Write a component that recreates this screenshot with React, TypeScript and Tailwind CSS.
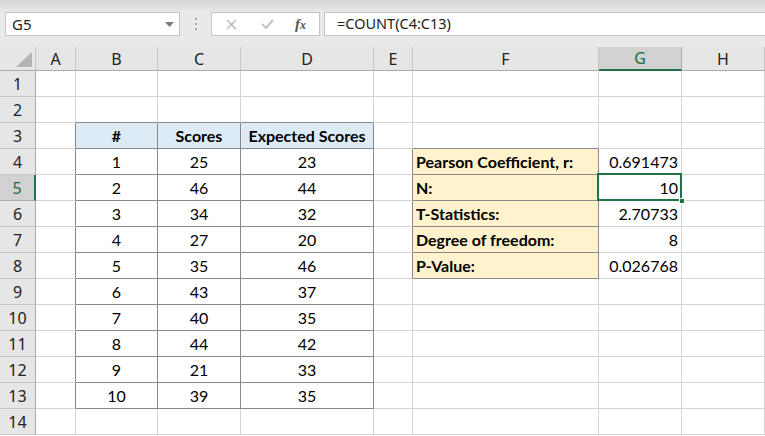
import React from 'react';

const cellFont = { fontFamily: 'Lato, "Open Sans", sans-serif' };
const uiFont = { fontFamily: '"Noto Sans", "Open Sans", sans-serif' };

const colLetters = ['A', 'B', 'C', 'D', 'E', 'F', 'G', 'H'];

const scores: [number, number, number][] = [
    [1, 25, 23],
    [2, 46, 44],
    [3, 34, 32],
    [4, 27, 20],
    [5, 35, 46],
    [6, 43, 37],
    [7, 40, 35],
    [8, 44, 42],
    [9, 21, 33],
    [10, 39, 35],
];

const stats: [string, string][] = [
    ['Pearson Coefficient, r:', '0.691473'],
    ['N:', '10'],
    ['T-Statistics:', '2.70733'],
    ['Degree of freedom:', '8'],
    ['P-Value:', '0.026768'],
];

const inRange = (v: number, a: number, b: number) => v >= a && v <= b;

const Cell: React.FC<{ row: number; col: number }> = ({ row, col }) => {
    // table 1: B3:D13, table 2: F4:F8 (+ values in G)
    const t1 = inRange(col, 1, 3) && inRange(row, 3, 13);
    const darkRight = (inRange(col, 0, 3) && inRange(row, 3, 13)) || (inRange(col, 4, 5) && inRange(row, 4, 8));
    const darkBottom = (inRange(col, 1, 3) && inRange(row, 2, 13)) || (col === 5 && inRange(row, 3, 8));

    let bg = 'bg-white';
    let content: React.ReactNode = null;
    let align = 'justify-center';
    let weight = 'font-normal';

    if (t1 && row === 3) {
        bg = 'bg-[#ddebf7]';
        weight = 'font-bold';
        content = ['#', 'Scores', 'Expected Scores'][col - 1];
    } else if (t1) {
        content = scores[row - 4][col - 1];
    }
    if (col === 5 && inRange(row, 4, 8)) {
        bg = 'bg-[#fff2cc]';
        weight = 'font-bold';
        align = 'justify-start pl-[3px]';
        content = stats[row - 4][0];
    }
    if (col === 6 && inRange(row, 4, 8)) {
        align = 'justify-end pr-[3px]';
        content = stats[row - 4][1];
    }

    const selected = row === 5 && col === 6;

    return (
        <div
            className={`relative h-[26px] flex items-center whitespace-nowrap text-[16px] text-black border-r border-b ${bg} ${align} ${weight} ${
                darkRight ? 'border-r-[#8a8a8a]' : 'border-r-[#d4d4d4]'
            } ${darkBottom ? 'border-b-[#8a8a8a]' : 'border-b-[#d4d4d4]'}`}
            style={cellFont}
        >
            {content}
            {selected && (
                <>
                    <div className="absolute -left-[2px] -top-[2px] -right-[1px] -bottom-[1px] border-2 border-[#217346]" />
                    <div className="absolute -right-[4px] -bottom-[4px] w-[6px] h-[6px] bg-[#217346] border border-white z-10" />
                </>
            )}
        </div>
    );
};

const App: React.FC = () => {
    const rows = Array.from({ length: 14 }, (_, i) => i + 1);

    return (
        <div className="w-[765px] h-[436px] overflow-hidden bg-white">
            {/* Formula bar */}
            <div className="h-[47px] bg-gradient-to-b from-[#d6d6d6] via-[#e9e9e9] via-[25%] to-[#e9e9e9] pt-[12px] flex items-start">
                <div className="ml-[5px] w-[175px] h-[24px] bg-white border border-[#c6c6c6] flex items-center justify-between pl-[6px] pr-[5px]" style={uiFont}>
                    <span className="text-[15px] text-[#222]">G5</span>
                    <svg width="9" height="5" viewBox="0 0 9 5"><path d="M0 0h9L4.5 5z" fill="#7a7a7a" /></svg>
                </div>
                <div className="w-[31px] h-[24px] flex flex-col items-center justify-center gap-[3px]">
                    <span className="w-[2px] h-[2px] bg-[#a6a6a6]" />
                    <span className="w-[2px] h-[2px] bg-[#a6a6a6]" />
                    <span className="w-[2px] h-[2px] bg-[#a6a6a6]" />
                </div>
                <div className="w-[109px] h-[24px] bg-white border border-[#c6c6c6] flex items-center">
                    <svg className="ml-[14px]" width="11" height="11" viewBox="0 0 11 11">
                        <path d="M1 1l9 9M10 1l-9 9" stroke="#b3b3b3" strokeWidth="1.3" />
                    </svg>
                    <svg className="ml-[24px]" width="13" height="10" viewBox="0 0 13 10">
                        <path d="M1 5l4 4 7-8" stroke="#c2c2c2" strokeWidth="2" fill="none" />
                    </svg>
                    <span className="ml-[21px] text-[15px] italic font-bold text-[#555]" style={{ fontFamily: '"Liberation Serif", serif' }}>
                        f<span className="text-[12px]">x</span>
                    </span>
                </div>
                <div className="ml-[4px] flex-1 h-[24px] bg-white border border-[#c6c6c6] border-r-0 flex items-center pl-[12px]" style={uiFont}>
                    <span className="text-[14.5px] text-[#222]">=COUNT(C4:C13)</span>
                </div>
            </div>

            {/* Sheet grid */}
            <div className="grid grid-cols-[36px_40px_82px_83px_133px_39px_186px_83px_1fr]">
                {/* corner */}
                <div className="h-[24px] bg-[#e6e6e6] border-r border-b border-r-[#c6c6c6] border-b-[#ababab] flex items-end justify-end pr-[3px] pb-[3px]">
                    <svg width="16" height="15" viewBox="0 0 16 15"><path d="M16 0v15H0z" fill="#b4b4b4" /></svg>
                </div>
                {colLetters.map((c) => (
                    <div
                        key={c}
                        className={`h-[24px] flex items-center justify-center text-[16px] border-r ${
                            c === 'G'
                                ? 'bg-[#d2d2d2] text-[#1e6b41] border-b-2 border-b-[#217346] border-r-[#ababab]'
                                : 'bg-[#e6e6e6] text-[#222] border-b border-b-[#ababab] border-r-[#c6c6c6]'
                        }`}
                        style={uiFont}
                    >
                        {c}
                    </div>
                ))}

                {rows.map((r) => (
                    <React.Fragment key={r}>
                        <div
                            className={`h-[26px] flex items-center justify-center text-[16px] border-b ${
                                r === 5
                                    ? 'bg-[#d2d2d2] text-[#1e6b41] border-r-2 border-r-[#217346] border-b-[#ababab]'
                                    : 'bg-[#e6e6e6] text-[#222] border-r border-r-[#ababab] border-b-[#c6c6c6]'
                            }`}
                            style={uiFont}
                        >
                            {r}
                        </div>
                        {colLetters.map((_, ci) => (
                            <Cell key={ci} row={r} col={ci} />
                        ))}
                    </React.Fragment>
                ))}
            </div>
        </div>
    );
};

export default App;
